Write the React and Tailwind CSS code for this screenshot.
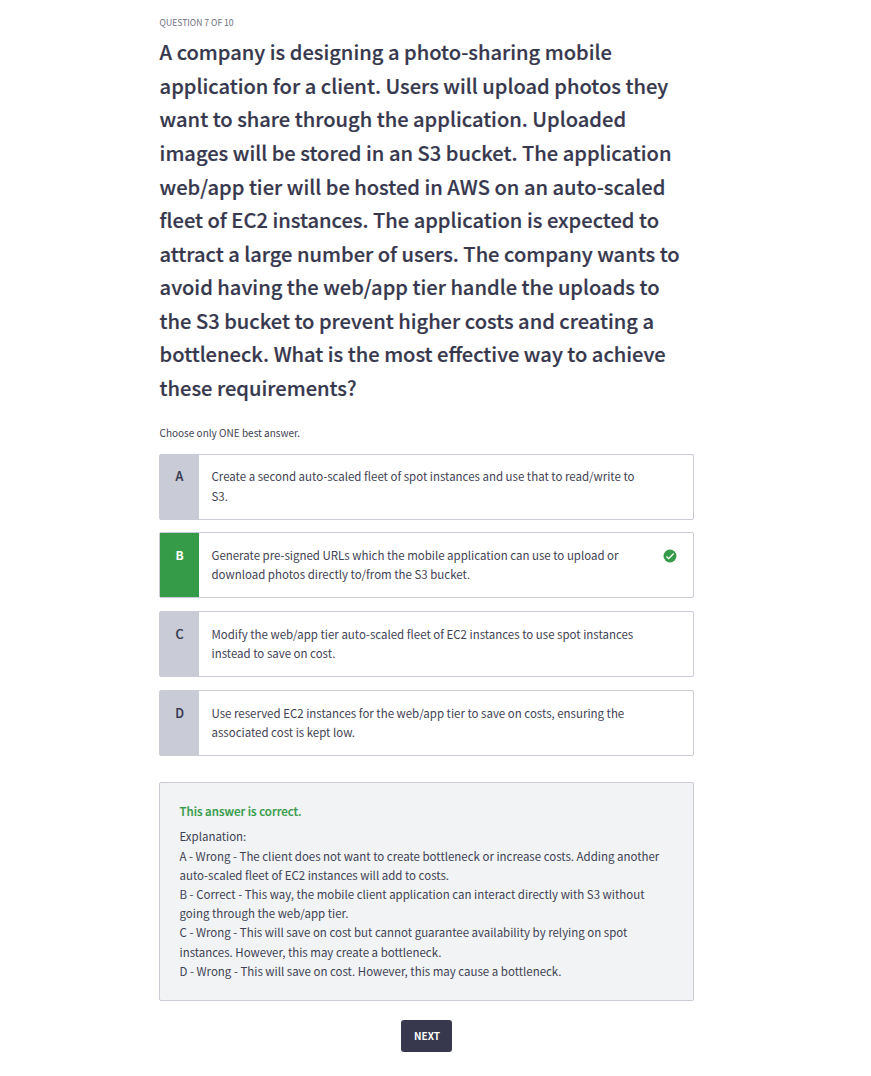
import React from 'react';

const QUESTION = [
  'A company is designing a photo-sharing mobile',
  'application for a client. Users will upload photos they',
  'want to share through the application. Uploaded',
  'images will be stored in an S3 bucket. The application',
  'web/app tier will be hosted in AWS on an auto-scaled',
  'fleet of EC2 instances. The application is expected to',
  'attract a large number of users. The company wants to',
  'avoid having the web/app tier handle the uploads to',
  'the S3 bucket to prevent higher costs and creating a',
  'bottleneck. What is the most effective way to achieve',
  'these requirements?',
];

const ANSWERS = [
  { id: 'A', lines: ['Create a second auto-scaled fleet of spot instances and use that to read/write to', 'S3.'] },
  {
    id: 'B',
    correct: true,
    lines: ['Generate pre-signed URLs which the mobile application can use to upload or', 'download photos directly to/from the S3 bucket.'],
  },
  { id: 'C', lines: ['Modify the web/app tier auto-scaled fleet of EC2 instances to use spot instances', 'instead to save on cost.'] },
  { id: 'D', lines: ['Use reserved EC2 instances for the web/app tier to save on costs, ensuring the', 'associated cost is kept low.'] },
];

const EXPLANATION = [
  'Explanation:',
  'A - Wrong - The client does not want to create bottleneck or increase costs. Adding another',
  'auto-scaled fleet of EC2 instances will add to costs.',
  'B - Correct - This way, the mobile client application can interact directly with S3 without',
  'going through the web/app tier.',
  'C - Wrong - This will save on cost but cannot guarantee availability by relying on spot',
  'instances. However, this may create a bottleneck.',
  'D - Wrong - This will save on cost. However, this may cause a bottleneck.',
];

function Lines({ lines }) {
  return lines.map((line) => (
    <span key={line} className="block whitespace-nowrap">
      {line}
    </span>
  ));
}

function CheckCircle() {
  return (
    <svg viewBox="0 0 16 16" className="mt-[15.5px] mr-4 size-[14px] shrink-0" aria-hidden="true">
      <circle cx="8" cy="8" r="7.4" fill="#369b48" />
      <path d="M3.9 8.5 6.5 11 12.2 5.2" fill="none" stroke="#fff" strokeWidth="1.5" />
    </svg>
  );
}

function Answer({ id, lines, correct }) {
  return (
    <li className="flex h-[66px] rounded-[2px] border border-[#c9cbd6]">
      <div
        className={
          correct
            ? 'w-[39px] shrink-0 bg-[#369b48] pt-3 text-center text-[12px] leading-[19.2px] font-bold text-white'
            : 'w-[39px] shrink-0 bg-[#c9cbd6] pt-[11.7px] text-center text-[12.5px] leading-[19.2px] font-medium text-[#37384e] [-webkit-text-stroke:0.2px_#37384e]'
        }
      >
        {id}
      </div>
      <div className="grow pt-[12.8px] pl-[12.5px] text-[11.47px] leading-[19.2px]">
        <Lines lines={lines} />
      </div>
      {correct && <CheckCircle />}
    </li>
  );
}

export default function App() {
  return (
    <main className="min-h-[1076px] bg-white pl-[159px] font-['Noto_Sans_CJK_SC',sans-serif] text-[#3f4254]">
      <div className="w-[535px] pt-[15px]">
        <p className="pl-[0.6px] text-[8.6px] leading-[14px] text-[#6f7180]">QUESTION 7 OF 10</p>
        <h1 className="mt-[6.15px] pl-[0.6px] text-[20.13px] leading-[33.6px] font-medium text-[#37384e] [-webkit-text-stroke:0.2px_#37384e]">
          <Lines lines={QUESTION} />
        </h1>
        <p className="mt-[19.85px] h-[29px] pl-[0.5px] text-[10.02px] leading-[16px]">Choose only ONE best answer.</p>
        <ul className="flex flex-col gap-[12.8px]">
          {ANSWERS.map((answer) => (
            <Answer key={answer.id} {...answer} />
          ))}
        </ul>
        <section className="mt-[26px] h-[219px] rounded-[2px] border border-[#c9cbd6] bg-[#f1f3f5] pt-[19.3px] pl-[19.5px] text-[11.47px] leading-[19.2px]">
          <h2 className="mb-[6px] text-[11.52px] font-medium text-[#369b48] [-webkit-text-stroke:0.2px_#369b48]">This answer is correct.</h2>
          <Lines lines={EXPLANATION} />
        </section>
        <button className="mx-auto mt-[19px] block h-8 w-[51px] rounded-[3px] bg-[#37384e] pl-px text-[10px] font-bold text-white">NEXT</button>
      </div>
    </main>
  );
}
